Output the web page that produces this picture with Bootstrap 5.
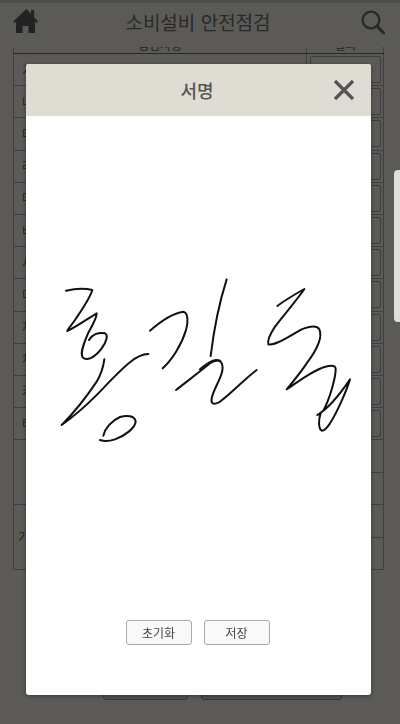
<!DOCTYPE html>
<html lang="ko">
<head>
<meta charset="utf-8">
<meta name="viewport" content="width=device-width, initial-scale=1">
<title>소비설비 안전점검</title>
<link rel="stylesheet" href="https://cdn.jsdelivr.net/npm/bootstrap@5.3.0/dist/css/bootstrap.min.css">
<style>
html,body{height:724px;overflow:hidden}
body{background:#e4e1da;font-family:"Noto Sans CJK KR","Liberation Sans",sans-serif;color:#555}
.top-bar{height:47px;background:#e4e1da;position:relative;z-index:1;border-top:3px solid #c4c2bc;padding:0 15px 7px 13px}
.top-title{font-size:19px;color:#666;line-height:1;margin-right:3px}
.sheet-wrap{padding:0 16px 0 13px;margin-top:-12px}
.sheet{width:100%;table-layout:fixed;border:1px solid #a09e98;border-collapse:collapse;font-size:12px;color:#555}
.sheet th,.sheet td{border:1px solid #a09e98;padding:0;height:32.2px;font-weight:400}
.sheet thead th{height:17px;line-height:17px;text-align:center;border-bottom:1px solid #666}
.sheet .name-cell{padding-left:8px}
.sheet .ans-cell{width:77px;padding:2px 2px 2px 3px}
.ans-box{height:27px;border:1px solid #999;border-radius:2px;background:#e4e1da}
.tall-row td{height:32.5px}
.low-btns{padding:90px 0 0 90px;gap:13px}
.low-btns div{height:40px;background:#cfccc6;border:1px solid #888;border-radius:3px}
.low-a{width:85px}.low-b{width:141px}
.dim-layer{position:fixed;inset:0;background:rgba(0,0,0,.6);z-index:2}
.sign-dialog{position:fixed;left:26px;top:64px;width:345px;height:631px;z-index:3;border:0;border-radius:3px;overflow:hidden;background:#fff;box-shadow:0 1px 4px rgba(0,0,0,.4)}
.sign-head{height:52px;background:#dfdcd4;position:relative;border:0;border-radius:0;padding:0;flex-shrink:0}
.sign-title{font-size:18px;font-weight:500;color:#555;margin:0 3px 0 0;line-height:1}
.sign-close{position:absolute;right:16px;top:15px;display:block;line-height:0;padding:0;background:none;border:0}
.sign-body{padding:0;flex:1;position:relative}
.sign-pad{position:absolute;left:-26px;top:-116px;width:400px;height:724px;pointer-events:none}
.sign-foot{height:75px;padding:0 2px 50px 0;gap:12px;border:0;margin:0;background:transparent;flex-shrink:0}
.sign-foot .btn{width:66px;height:25px;padding:0;margin:0;font-size:12px;line-height:23px;color:#444;background:#f9f9f9;border:1px solid #aaa;border-radius:3px}
.side-tab{position:fixed;right:0;top:170px;width:6px;height:152px;background:#dedede;border-radius:4px 0 0 4px;z-index:4}
</style>
</head>
<body>
<header class="top-bar d-flex align-items-center justify-content-between">
  <svg width="25" height="25" viewBox="0 0 25 25" aria-label="홈"><path fill="#555" d="M13.5 0 25 12.5 23.6 14 22 12.5V24h-6.5v-7h-6v7H3V12.5L1.4 14 0 12.5 13.5 0ZM18 1h3.2v7.4L18 5Z"/></svg>
  <div class="top-title">소비설비 안전점검</div>
  <svg width="24" height="24" viewBox="0 0 24 24" fill="none" stroke="#666" aria-label="검색"><circle cx="10" cy="10" r="8.4" stroke-width="2.4"/><path d="M16 16l7 7.4" stroke-width="3" stroke-linecap="round"/></svg>
</header>
<main class="sheet-wrap">
  <table class="sheet">
    <thead><tr><th>점검사항</th><th class="ans-cell py-0">결과</th></tr></thead>
    <tbody>
      <tr><td class="name-cell">가</td><td class="ans-cell"><div class="ans-box"></div></td></tr>
      <tr><td class="name-cell">나</td><td class="ans-cell"><div class="ans-box"></div></td></tr>
      <tr><td class="name-cell">다</td><td class="ans-cell"><div class="ans-box"></div></td></tr>
      <tr><td class="name-cell">라</td><td class="ans-cell"><div class="ans-box"></div></td></tr>
      <tr><td class="name-cell">마</td><td class="ans-cell"><div class="ans-box"></div></td></tr>
      <tr><td class="name-cell">바</td><td class="ans-cell"><div class="ans-box"></div></td></tr>
      <tr><td class="name-cell">사</td><td class="ans-cell"><div class="ans-box"></div></td></tr>
      <tr><td class="name-cell">다</td><td class="ans-cell"><div class="ans-box"></div></td></tr>
      <tr><td class="name-cell">자</td><td class="ans-cell"><div class="ans-box"></div></td></tr>
      <tr><td class="name-cell">차</td><td class="ans-cell"><div class="ans-box"></div></td></tr>
      <tr><td class="name-cell">카</td><td class="ans-cell"><div class="ans-box"></div></td></tr>
      <tr><td class="name-cell">타</td><td class="ans-cell"><div class="ans-box"></div></td></tr>
      <tr class="tall-row"><td rowspan="2"></td><td></td></tr>
      <tr class="tall-row"><td></td></tr>
      <tr class="tall-row"><td rowspan="2" class="ps-1">기타</td><td></td></tr>
      <tr class="tall-row"><td></td></tr>
    </tbody>
  </table>
  <div class="low-btns d-flex"><div class="low-a"></div><div class="low-b"></div></div>
</main>

<div class="dim-layer"></div>
<div class="side-tab"></div>

<section class="modal-content sign-dialog d-flex flex-column">
  <div class="modal-header sign-head justify-content-center">
    <h2 class="sign-title">서명</h2>
    <button type="button" class="sign-close" aria-label="닫기">
      <svg width="22" height="22" viewBox="0 0 22 22" fill="none" stroke="#555" stroke-width="3.2"><path d="M2 2l18 18M20 2 2 20"/></svg>
    </button>
  </div>
  <div class="modal-body sign-body">
    <svg class="sign-pad" viewBox="0 0 400 724" fill="none" stroke="#111" stroke-linecap="round" stroke-linejoin="round" aria-label="서명 그림">
      <g transform="translate(40 270) scale(.33333)" stroke-width="6">
        <path d="M78 62C105 56 135 55 157 60C150 85 125 120 105 150C95 165 85 175 82 183C110 170 145 145 170 130C170 150 150 175 140 200C130 225 120 250 128 262C140 275 165 262 185 235C200 215 205 195 195 190C175 185 155 195 147 210"/>
        <path d="M193 268C190 290 182 315 170 335C150 365 105 425 65 465C100 440 135 410 165 380C195 350 235 305 270 277C290 260 305 252 325 252"/>
        <path d="M190 497C195 475 215 452 240 441C260 435 285 437 287 455C285 475 255 497 225 508C205 515 190 514 180 510"/>
        <path d="M330 182C355 160 395 130 430 125C445 130 445 155 438 180C425 225 395 270 368 295"/>
        <path d="M408 360C440 335 480 305 510 280C520 272 530 270 540 272"/>
      </g>
      <g transform="translate(200 270) scale(.33333)" stroke-width="6">
        <path d="M80 28C65 75 45 150 32 258"/>
        <path d="M0 298C15 285 30 272 48 270C65 270 72 285 65 310C58 335 40 360 35 385C32 400 40 405 55 398C75 388 130 330 170 300"/>
        <path d="M232 108C255 90 290 70 313 57C295 85 255 130 225 170C212 190 200 210 205 223C225 228 265 200 305 178C330 168 350 165 358 178C368 200 350 240 320 280C300 310 275 340 260 358C295 335 345 295 385 288C398 286 406 288 407 295C408 320 390 385 370 422C365 428 358 432 352 435C385 415 425 365 450 328C440 360 415 420 390 460C380 475 372 483 365 482C355 475 355 450 362 430"/>
      </g>
    </svg>
  </div>
  <div class="modal-footer sign-foot justify-content-center">
    <button type="button" class="btn">초기화</button>
    <button type="button" class="btn">저장</button>
  </div>
</section>
<script src="https://cdn.jsdelivr.net/npm/bootstrap@5.3.0/dist/js/bootstrap.bundle.min.js"></script>
</body>
</html>
